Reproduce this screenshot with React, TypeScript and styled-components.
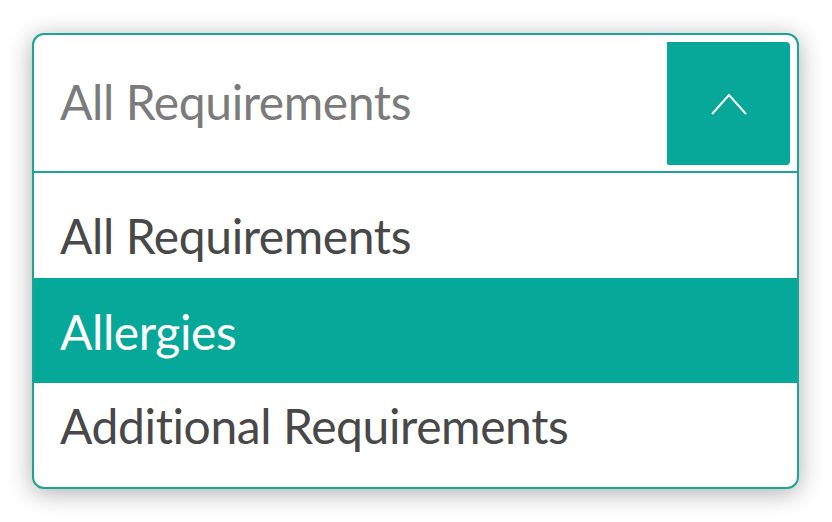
import React from "react";
import styled, { createGlobalStyle } from "styled-components";

const GlobalStyle = createGlobalStyle`
  html, body {
    margin: 0;
    background: #ffffff;
  }
  body {
    font-family: Lato, "Open Sans", "Liberation Sans", sans-serif;
  }
`;

const Page = styled.div`
  min-height: 522px;
  box-sizing: border-box;
  padding: 33px 33px 33px 32px;
`;

const Select = styled.div`
  width: 767px;
  box-sizing: border-box;
  border: 2px solid #1ba497;
  border-radius: 12px;
  background: #ffffff;
  overflow: hidden;
  box-shadow: 0 4px 24px rgba(0, 0, 0, 0.32);
`;

const Header = styled.div`
  display: flex;
  align-items: center;
  justify-content: space-between;
  height: 138px;
  padding: 7px 7px 6px 26px;
  box-sizing: border-box;
  border-bottom: 2px solid #1ba497;
`;

const Placeholder = styled.span`
  font-size: 48px;
  letter-spacing: -0.4px;
  color: #7b7b7b;
  margin-top: -4px;
`;

const ToggleButton = styled.button`
  display: flex;
  align-items: center;
  justify-content: center;
  width: 123px;
  height: 123px;
  border: none;
  padding: 0;
  background: #07a899;
  border-radius: 0 4px 4px 2px;
  cursor: pointer;
`;

const Option = styled.div<{ active?: boolean; shift: number; h: number }>`
  display: flex;
  align-items: center;
  box-sizing: border-box;
  height: ${({ h }) => h}px;
  padding: ${({ shift }) => (shift > 0 ? `${shift * 2}px 0 0 26px` : `0 0 ${-shift * 2}px 26px`)};
  font-size: 48px;
  letter-spacing: -0.4px;
  color: ${({ active }) => (active ? "#ffffff" : "#484848")};
  background: ${({ active }) => (active ? "#06a899" : "transparent")};
`;

const options = [
  { label: "All Requirements", shift: 10, h: 105 },
  { label: "Allergies", shift: 1, h: 105 },
  { label: "Additional Requirements", shift: -10, h: 104 },
];

export default function App() {
  const selected = 1;

  return (
    <Page>
      <GlobalStyle />
      <Select>
        <Header>
          <Placeholder>All Requirements</Placeholder>
          <ToggleButton>
            <svg width="36" height="22" viewBox="0 0 36 22" fill="none">
              <path d="M1 21 L18 2 L35 21" stroke="#ffffff" strokeWidth="2" />
            </svg>
          </ToggleButton>
        </Header>
        {options.map((o, i) => (
          <Option key={o.label} active={i === selected} shift={o.shift} h={o.h}>
            {o.label}
          </Option>
        ))}
      </Select>
    </Page>
  );
}
